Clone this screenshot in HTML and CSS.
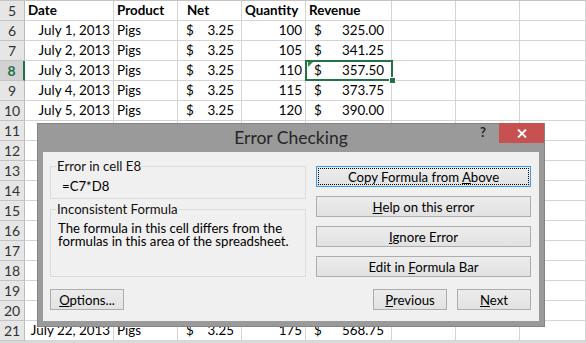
FILE: index.html
```html
<!DOCTYPE html>
<html lang="en">
<head>
    <meta charset="UTF-8">
    <meta name="viewport" content="width=device-width, initial-scale=1.0">
    <title>Error Checking</title>
    <link rel="stylesheet" href="styles.css">
</head>
<body>
    <div class="sheet">
        <div class="row">
            <div class="cell head">5</div>
            <div class="cell bold">Date</div>
            <div class="cell bold">Product</div>
            <div class="cell bold net-head">Net</div>
            <div class="cell bold">Quantity</div>
            <div class="cell bold">Revenue</div>
            <div class="cell"></div><div class="cell"></div><div class="cell"></div>
        </div>
        <div class="row">
            <div class="cell head">6</div>
            <div class="cell right">July 1, 2013</div>
            <div class="cell">Pigs</div>
            <div class="cell money"><span>$</span><span>3.25</span></div>
            <div class="cell right">100</div>
            <div class="cell money"><span>$</span><span>325.00</span></div>
            <div class="cell"></div><div class="cell"></div><div class="cell"></div>
        </div>
        <div class="row">
            <div class="cell head">7</div>
            <div class="cell right">July 2, 2013</div>
            <div class="cell">Pigs</div>
            <div class="cell money"><span>$</span><span>3.25</span></div>
            <div class="cell right">105</div>
            <div class="cell money"><span>$</span><span>341.25</span></div>
            <div class="cell"></div><div class="cell"></div><div class="cell"></div>
        </div>
        <div class="row">
            <div class="cell head active">8</div>
            <div class="cell right">July 3, 2013</div>
            <div class="cell">Pigs</div>
            <div class="cell money"><span>$</span><span>3.25</span></div>
            <div class="cell right">110</div>
            <div class="cell money selected"><span>$</span><span>357.50</span></div>
            <div class="cell"></div><div class="cell"></div><div class="cell"></div>
        </div>
        <div class="row">
            <div class="cell head">9</div>
            <div class="cell right">July 4, 2013</div>
            <div class="cell">Pigs</div>
            <div class="cell money"><span>$</span><span>3.25</span></div>
            <div class="cell right">115</div>
            <div class="cell money"><span>$</span><span>373.75</span></div>
            <div class="cell"></div><div class="cell"></div><div class="cell"></div>
        </div>
        <div class="row">
            <div class="cell head">10</div>
            <div class="cell right">July 5, 2013</div>
            <div class="cell">Pigs</div>
            <div class="cell money"><span>$</span><span>3.25</span></div>
            <div class="cell right">120</div>
            <div class="cell money"><span>$</span><span>390.00</span></div>
            <div class="cell"></div><div class="cell"></div><div class="cell"></div>
        </div>
        <div class="row"><div class="cell head">11</div><div class="cell"></div><div class="cell"></div><div class="cell"></div><div class="cell"></div><div class="cell"></div><div class="cell"></div><div class="cell"></div><div class="cell"></div></div>
        <div class="row"><div class="cell head">12</div><div class="cell"></div><div class="cell"></div><div class="cell"></div><div class="cell"></div><div class="cell"></div><div class="cell"></div><div class="cell"></div><div class="cell"></div></div>
        <div class="row"><div class="cell head">13</div><div class="cell"></div><div class="cell"></div><div class="cell"></div><div class="cell"></div><div class="cell"></div><div class="cell"></div><div class="cell"></div><div class="cell"></div></div>
        <div class="row"><div class="cell head">14</div><div class="cell"></div><div class="cell"></div><div class="cell"></div><div class="cell"></div><div class="cell"></div><div class="cell"></div><div class="cell"></div><div class="cell"></div></div>
        <div class="row"><div class="cell head">15</div><div class="cell"></div><div class="cell"></div><div class="cell"></div><div class="cell"></div><div class="cell"></div><div class="cell"></div><div class="cell"></div><div class="cell"></div></div>
        <div class="row"><div class="cell head">16</div><div class="cell"></div><div class="cell"></div><div class="cell"></div><div class="cell"></div><div class="cell"></div><div class="cell"></div><div class="cell"></div><div class="cell"></div></div>
        <div class="row"><div class="cell head">17</div><div class="cell"></div><div class="cell"></div><div class="cell"></div><div class="cell"></div><div class="cell"></div><div class="cell"></div><div class="cell"></div><div class="cell"></div></div>
        <div class="row"><div class="cell head">18</div><div class="cell"></div><div class="cell"></div><div class="cell"></div><div class="cell"></div><div class="cell"></div><div class="cell"></div><div class="cell"></div><div class="cell"></div></div>
        <div class="row"><div class="cell head">19</div><div class="cell"></div><div class="cell"></div><div class="cell"></div><div class="cell"></div><div class="cell"></div><div class="cell"></div><div class="cell"></div><div class="cell"></div></div>
        <div class="row"><div class="cell head">20</div><div class="cell"></div><div class="cell"></div><div class="cell"></div><div class="cell"></div><div class="cell"></div><div class="cell"></div><div class="cell"></div><div class="cell"></div></div>
        <div class="row">
            <div class="cell head">21</div>
            <div class="cell right">July 22, 2013</div>
            <div class="cell">Pigs</div>
            <div class="cell money"><span>$</span><span>3.25</span></div>
            <div class="cell right">175</div>
            <div class="cell money"><span>$</span><span>568.75</span></div>
            <div class="cell"></div><div class="cell"></div><div class="cell"></div>
        </div>
    </div>

    <div class="dialog">
        <div class="dialog-title">
            Error Checking
            <span class="help-btn">?</span>
            <span class="close-btn">
                <svg width="10" height="9" viewBox="0 0 10 9"><path d="M1 0.5 L9 8.5 M9 0.5 L1 8.5" stroke="#fff" stroke-width="1.8"/></svg>
            </span>
        </div>
        <div class="dialog-body">
            <div class="dialog-main">
                <div class="left-col">
                    <fieldset class="group">
                        <legend>Error in cell E8</legend>
                        <div class="formula">=C7*D8</div>
                    </fieldset>
                    <fieldset class="group group-info">
                        <legend>Inconsistent Formula</legend>
                        <p class="info">The formula in this cell differs from the formulas in this area of the spreadsheet.</p>
                    </fieldset>
                </div>
                <div class="right-col">
                    <button class="btn focused"><span class="focus-ring">Copy Formula from <u>A</u>bove</span></button>
                    <button class="btn"><u>H</u>elp on this error</button>
                    <button class="btn"><u>I</u>gnore Error</button>
                    <button class="btn">Edit in <u>F</u>ormula Bar</button>
                </div>
            </div>
            <div class="dialog-footer">
                <button class="btn small"><u>O</u>ptions...</button>
                <div class="nav">
                    <button class="btn small"><u>P</u>revious</button>
                    <button class="btn small"><u>N</u>ext</button>
                </div>
            </div>
        </div>
    </div>
</body>
</html>
```

FILE: styles.css
```css
body {
    margin: 0;
    padding: 0;
    position: relative;
    width: 586px;
    height: 343px;
    overflow: hidden;
    background-color: #dadada;
    font-family: Lato, "Liberation Sans", sans-serif;
}

.sheet {
    border-top: 1px solid #c4c4c4;
    font-size: 13.4px;
    color: #000;
    background-color: #fff;
}

.row {
    display: grid;
    grid-template-columns: 25px 89px 64px 64px 64px 86px 64px 64px 66px;
    height: 20px;
}

.cell {
    box-sizing: border-box;
    height: 20px;
    border-right: 1px solid #d4d4d4;
    border-bottom: 1px solid #d4d4d4;
    padding: 0 3px;
    line-height: 19px;
    white-space: nowrap;
    overflow: hidden;
    position: relative;
}

.cell.head {
    background-color: #e6e6e6;
    border-right-color: #bcbcbc;
    border-bottom-color: #c4c4c4;
    text-align: center;
    color: #333;
    padding: 0;
    font-size: 14px;
}

.cell.head.active {
    background-color: #d2d2d2;
    color: #217346;
    font-weight: bold;
    border-right: 2px solid #217346;
}

.bold {
    font-weight: bold;
}

.net-head {
    padding-left: 9px;
}

.right {
    text-align: right;
}

.money {
    display: flex;
    justify-content: space-between;
    padding: 0 7px 0 8px;
}

.cell.selected {
    overflow: visible;
}

.cell.selected::before {
    content: "";
    position: absolute;
    left: 2px;
    top: 1px;
    border-top: 5px solid #2d8a3e;
    border-right: 5px solid transparent;
}

.cell.selected::after {
    content: "";
    position: absolute;
    left: -1px;
    top: -1px;
    right: -2px;
    bottom: -1px;
    border: 2px solid #217346;
}

.selected span:last-child::after {
    content: "";
    position: absolute;
    right: -5px;
    bottom: -4px;
    width: 5px;
    height: 5px;
    background-color: #217346;
    border: 1px solid #fff;
    z-index: 1;
}

/* Dialog */
.dialog {
    position: absolute;
    left: 37px;
    top: 123px;
    width: 508px;
    height: 204px;
    box-sizing: border-box;
    background-color: #9a9a9a;
    border: 1px solid #838383;
    padding: 0 5px 5px 5px;
    font-family: Lato, "Liberation Sans", sans-serif;
}

.dialog-title {
    position: relative;
    height: 28px;
    line-height: 27px;
    text-align: center;
    font-size: 17.5px;
    color: #262626;
}

.help-btn {
    position: absolute;
    left: 437px;
    top: 0;
    line-height: 17px;
    font-size: 13px;
    font-weight: bold;
    color: #222;
}

.close-btn {
    position: absolute;
    left: 456px;
    top: -1px;
    width: 45px;
    height: 20px;
    background-color: #c75050;
    display: flex;
    align-items: center;
    justify-content: center;
}

.dialog-body {
    background-color: #f0f0f0;
    height: 169px;
    box-sizing: border-box;
    padding: 7px 8px 0 7px;
    font-size: 13.2px;
    color: #000;
}

.dialog-main {
    display: grid;
    grid-template-columns: 256px 215px;
    column-gap: 10px;
    align-items: start;
}

.group {
    margin: 0;
    padding: 0 5px 5px 5px;
    border: 1px solid #dcdcdc;
    min-width: 0;
}

.group legend {
    padding: 0 1px;
    line-height: 14px;
    color: #111;
}

.formula {
    margin: 6px 0 0 6px;
    line-height: 14px;
}

.group-info {
    margin-top: 3px;
    padding-bottom: 28px;
}

.info {
    margin: 6px 0 0 2px;
    line-height: 13px;
}

.right-col {
    display: flex;
    flex-direction: column;
    gap: 9px;
    margin-top: 7px;
}

.btn {
    box-sizing: border-box;
    height: 21px;
    padding: 0;
    background: linear-gradient(#ececec, #e2e2e2);
    border: 1px solid #adadad;
    font-family: Lato, "Liberation Sans", sans-serif;
    font-size: 13.2px;
    color: #000;
    text-align: center;
}

.btn.focused {
    border-color: #3c99e6;
    padding: 1px;
}

.focus-ring {
    display: block;
    height: 17px;
    line-height: 16px;
    box-sizing: border-box;
    border: 1px dotted #000;
}

.dialog-footer {
    display: flex;
    justify-content: space-between;
    margin-top: 12px;
}

.nav {
    display: flex;
    gap: 10px;
}

.btn.small {
    width: 74px;
}
```
